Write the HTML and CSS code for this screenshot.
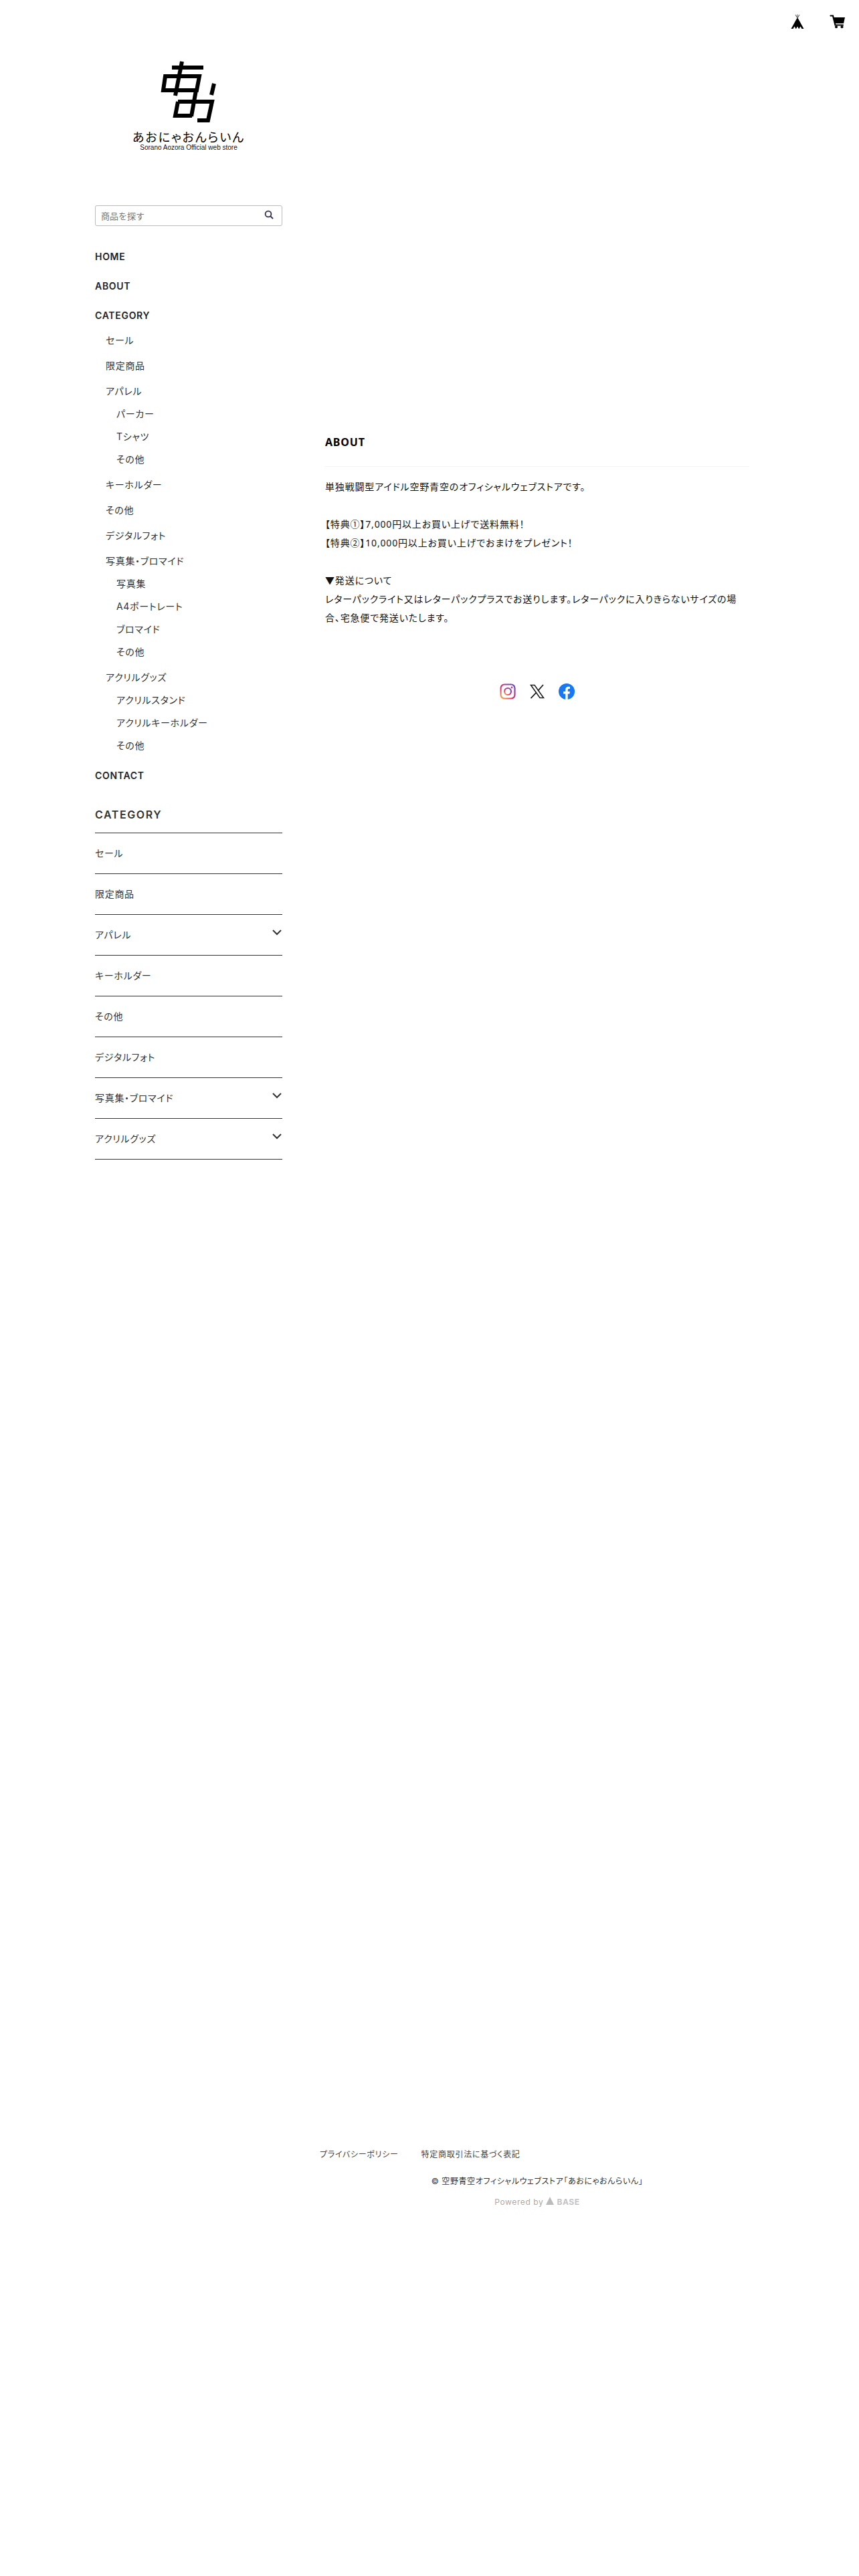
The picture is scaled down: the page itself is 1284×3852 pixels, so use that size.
FILE: index.html
```html
<!DOCTYPE html>
<html lang="ja">
<head>
    <meta charset="UTF-8">
    <title>空野青空オフィシャルウェブストア「あおにゃおんらいん」</title>
    <link rel="stylesheet" href="styles.css">
</head>
<body>
    <header class="top-bar">
        <a class="top-icon" href="#">
            <svg width="20" height="24" viewBox="0 0 20 24">
                <path d="M10 6 L19.5 23 H0.5 Z" fill="#000"/>
                <path d="M7 2 L10 7 L13 2 M10 1.5 V7" stroke="#666" stroke-width="1.1" fill="none"/>
                <path d="M3.5 23 L5.5 19.5 L7.5 23 Z M8 23 L10 19.5 L12 23 Z M12.5 23 L14.5 19.5 L16.5 23 Z" fill="#fff"/>
            </svg>
        </a>
        <a class="top-icon" href="#">
            <svg width="24" height="24" viewBox="0 0 24 24">
                <path d="M1.5 3.5 H5 L8.5 17.5 H20" stroke="#000" stroke-width="2.2" fill="none" stroke-linecap="round"/>
                <path d="M6 6 H23 L21 15 H8 Z" fill="#000"/>
                <circle cx="10" cy="20.2" r="2" fill="#000"/>
                <circle cx="18.5" cy="20.2" r="2" fill="#000"/>
            </svg>
        </a>
    </header>

    <div class="page">
        <aside class="sidebar">
            <div class="logo">
                <svg class="logo-mark" width="110" height="105" viewBox="0 0 110 105">
                    <g stroke="#000" stroke-width="6" fill="none">
                        <path d="M27 16 H74"/>
                        <path d="M42 7 L32 58"/>
                        <path d="M17 29 H68 L64 50 H14 Z"/>
                        <path d="M63 50 L56 89"/>
                        <path d="M36 67 H87 L81 95 H65"/>
                        <path d="M36 67 L32 88 H57"/>
                        <path d="M90 40 L86 57"/>
                    </g>
                </svg>
                <div class="logo-name">あおにゃおんらいん</div>
                <div class="logo-sub">Sorano Aozora Official web store</div>
            </div>

            <form class="search">
                <input class="search-input" type="text" placeholder="商品を探す">
                <svg class="search-icon" width="14" height="14" viewBox="0 0 14 14">
                    <circle cx="6" cy="6" r="4.4" stroke="#2e3050" stroke-width="1.8" fill="none"/>
                    <path d="M9.4 9.4 L13 13" stroke="#2e3050" stroke-width="2"/>
                </svg>
            </form>

            <nav class="nav">
                <a class="nav-top" href="#">HOME</a>
                <a class="nav-top" href="#">ABOUT</a>
                <a class="nav-top nav-parent" href="#">CATEGORY</a>
                <a class="nav-cat" href="#">セール</a>
                <a class="nav-cat" href="#">限定商品</a>
                <a class="nav-cat" href="#">アパレル</a>
                <a class="nav-sub" href="#">パーカー</a>
                <a class="nav-sub" href="#">Tシャツ</a>
                <a class="nav-sub" href="#">その他</a>
                <a class="nav-cat" href="#">キーホルダー</a>
                <a class="nav-cat" href="#">その他</a>
                <a class="nav-cat" href="#">デジタルフォト</a>
                <a class="nav-cat" href="#">写真集・ブロマイド</a>
                <a class="nav-sub" href="#">写真集</a>
                <a class="nav-sub" href="#">A4ポートレート</a>
                <a class="nav-sub" href="#">ブロマイド</a>
                <a class="nav-sub" href="#">その他</a>
                <a class="nav-cat" href="#">アクリルグッズ</a>
                <a class="nav-sub" href="#">アクリルスタンド</a>
                <a class="nav-sub" href="#">アクリルキーホルダー</a>
                <a class="nav-sub" href="#">その他</a>
                <a class="nav-top nav-contact" href="#">CONTACT</a>
            </nav>

            <section class="cat-box">
                <h2 class="cat-title">CATEGORY</h2>
                <ul class="cat-list">
                    <li class="cat-row">セール</li>
                    <li class="cat-row">限定商品</li>
                    <li class="cat-row">アパレル
                        <svg class="chevron" width="16" height="10" viewBox="0 0 16 10"><path d="M2 2 L8 8 L14 2" stroke="#333" stroke-width="2" fill="none"/></svg>
                    </li>
                    <li class="cat-row">キーホルダー</li>
                    <li class="cat-row">その他</li>
                    <li class="cat-row">デジタルフォト</li>
                    <li class="cat-row">写真集・ブロマイド
                        <svg class="chevron" width="16" height="10" viewBox="0 0 16 10"><path d="M2 2 L8 8 L14 2" stroke="#333" stroke-width="2" fill="none"/></svg>
                    </li>
                    <li class="cat-row">アクリルグッズ
                        <svg class="chevron" width="16" height="10" viewBox="0 0 16 10"><path d="M2 2 L8 8 L14 2" stroke="#333" stroke-width="2" fill="none"/></svg>
                    </li>
                </ul>
            </section>
        </aside>

        <div class="main">
            <main class="about">
                <h1 class="about-title">ABOUT</h1>
                <p class="about-text">単独戦闘型アイドル空野青空のオフィシャルウェブストアです。<br><br>【特典①】7,000円以上お買い上げで送料無料！<br>【特典②】10,000円以上お買い上げでおまけをプレゼント！<br><br>▼発送について<br>レターパックライト又はレターパックプラスでお送りします。レターパックに入りきらないサイズの場合、宅急便で発送いたします。</p>
                <div class="social">
                    <a href="#">
                        <svg width="24" height="24" viewBox="0 0 24 24">
                            <defs>
                                <linearGradient id="ig" x1="0" y1="1" x2="1" y2="0">
                                    <stop offset="0" stop-color="#fdb44a"/>
                                    <stop offset="0.4" stop-color="#e8336d"/>
                                    <stop offset="1" stop-color="#5a52c8"/>
                                </linearGradient>
                            </defs>
                            <rect x="1.5" y="1.5" width="21" height="21" rx="5.5" stroke="url(#ig)" stroke-width="2.2" fill="none"/>
                            <circle cx="12" cy="12" r="5" stroke="url(#ig)" stroke-width="2.2" fill="none"/>
                            <circle cx="18" cy="6" r="1.4" fill="#b93a9c"/>
                        </svg>
                    </a>
                    <a href="#">
                        <svg width="24" height="24" viewBox="0 0 24 24">
                            <path d="M2.5 2.5 H8 L21.5 21.5 H16 Z" stroke="#222" stroke-width="1.6" fill="none"/>
                            <path d="M21 2 L13.2 10.8 M10.8 13.4 L2.5 22" stroke="#222" stroke-width="1.8" fill="none"/>
                        </svg>
                    </a>
                    <a href="#">
                        <svg width="24" height="24" viewBox="0 0 24 24">
                            <circle cx="12" cy="12" r="12" fill="#1877f2"/>
                            <path d="M10.2 24 V15.4 H7.2 V12 H10.2 V9.4 C10.2 6.4 12 4.8 14.7 4.8 C15.9 4.8 17 5 17 5 V7.9 H15.5 C14 7.9 13.7 8.8 13.7 9.7 V12 H16.9 L16.4 15.4 H13.7 V24 Z" fill="#fff"/>
                        </svg>
                    </a>
                </div>
            </main>

            <footer class="footer">
                <div class="footer-links">
                    <a href="#">プライバシーポリシー</a>
                    <a href="#">特定商取引法に基づく表記</a>
                </div>
                <div class="copyright">© 空野青空オフィシャルウェブストア「あおにゃおんらいん」</div>
                <div class="powered">Powered by
                    <svg width="12" height="12" viewBox="0 0 12 12"><path d="M6 0 L12 12 H0 Z" fill="#bbb"/></svg>
                    <span class="base">BASE</span>
                </div>
            </footer>
        </div>
    </div>
</body>
</html>
```

FILE: styles.css
```css
body {
    margin: 0;
    background: #fff;
    color: #222;
    font-family: Inter, "Noto Sans CJK JP", sans-serif;
    font-size: 14px;
    font-feature-settings: "palt";
}

a {
    color: inherit;
    text-decoration: none;
}

.top-bar {
    display: flex;
    justify-content: flex-end;
    gap: 38px;
    height: 24px;
    padding: 20px 20px 0 0;
}

.top-icon {
    display: block;
    height: 24px;
}

.page {
    display: flex;
    gap: 64px;
    padding: 0 0 0 142px;
}

.sidebar {
    width: 280px;
    flex-shrink: 0;
}

/* logo */
.logo {
    display: flex;
    flex-direction: column;
    align-items: center;
    height: 263px;
    padding-top: 41px;
    box-sizing: border-box;
}

.logo-mark {
    flex-shrink: 0;
    margin-left: 6px;
}

.logo-name {
    margin-top: 3px;
    font-family: "Noto Sans CJK JP", sans-serif;
    font-weight: 400;
    font-size: 18px;
    line-height: 22px;
    letter-spacing: 2px;
    color: #000;
}

.logo-sub {
    font-family: "Liberation Sans", sans-serif;
    font-size: 10px;
    line-height: 11px;
    color: #111;
}

/* search */
.search {
    position: relative;
}

.search-input {
    display: block;
    width: 100%;
    height: 31px;
    box-sizing: border-box;
    border: 1px solid #bbb;
    border-radius: 3px;
    padding: 0 30px 0 8px;
    font-family: "Noto Sans CJK JP", sans-serif;
    font-size: 13px;
}

.search-input::placeholder {
    color: #777;
}

.search-icon {
    position: absolute;
    top: 7px;
    right: 13px;
}

/* nav */
.nav {
    margin-top: 24px;
}

.nav a {
    display: block;
    letter-spacing: 0.05em;
}

.nav-top {
    height: 44px;
    line-height: 44px;
    font-weight: 600;
    color: #1c2229;
}

.nav .nav-parent {
    height: 40px;
}

.nav-cat {
    height: 38px;
    line-height: 38px;
    padding-left: 16px;
    color: #333;
}

.nav-sub {
    height: 34px;
    line-height: 30px;
    padding-left: 32px;
    color: #333;
}

.nav-contact {
    margin-top: 4px;
}

/* category box */
.cat-box {
    margin-top: 24px;
}

.cat-title {
    margin: 0;
    height: 39px;
    font-size: 16px;
    line-height: 24px;
    font-weight: 600;
    letter-spacing: 0.1em;
    color: #333;
    border-bottom: 1px solid #333;
}

.cat-list {
    margin: 0;
    padding: 0;
    list-style: none;
}

.cat-row {
    position: relative;
    height: 60px;
    line-height: 60px;
    border-bottom: 1px solid #333;
    color: #333;
    letter-spacing: 0.05em;
}

.chevron {
    position: absolute;
    top: 21px;
    right: 0;
}

/* main column */
.main {
    width: 634px;
    height: 3259px;
    display: flex;
    flex-direction: column;
    justify-content: space-between;
}

.about {
    padding-top: 605px;
}

.about-title {
    margin: 0 0 16px;
    padding-bottom: 24px;
    border-bottom: 1px solid #f2f2f2;
    font-family: "Noto Sans", "Noto Sans CJK JP", sans-serif;
    font-size: 16px;
    line-height: 24px;
    font-weight: 700;
    letter-spacing: 0.05em;
    color: #000;
}

.about-text {
    margin: 0;
    font-family: "Noto Sans", "Noto Sans CJK JP", sans-serif;
    font-size: 14px;
    line-height: 28px;
    letter-spacing: 0.06em;
    color: #111;
}

.social {
    display: flex;
    justify-content: center;
    gap: 20px;
    margin-top: 84px;
}

.social a {
    display: block;
    height: 24px;
}

.footer {
    text-align: center;
}

.footer-links {
    display: flex;
    gap: 34px;
    margin-left: -8px;
    font-size: 12px;
    line-height: 20px;
    letter-spacing: 0.06em;
    color: #444;
}

.copyright {
    margin-top: 20px;
    font-size: 12px;
    line-height: 20px;
    letter-spacing: 0.05em;
    color: #333;
}

.powered {
    margin-top: 11px;
    font-size: 12px;
    line-height: 20px;
    letter-spacing: 0.05em;
    color: #aaa;
}

.base {
    font-weight: 700;
    color: #c4c4c4;
}
```
